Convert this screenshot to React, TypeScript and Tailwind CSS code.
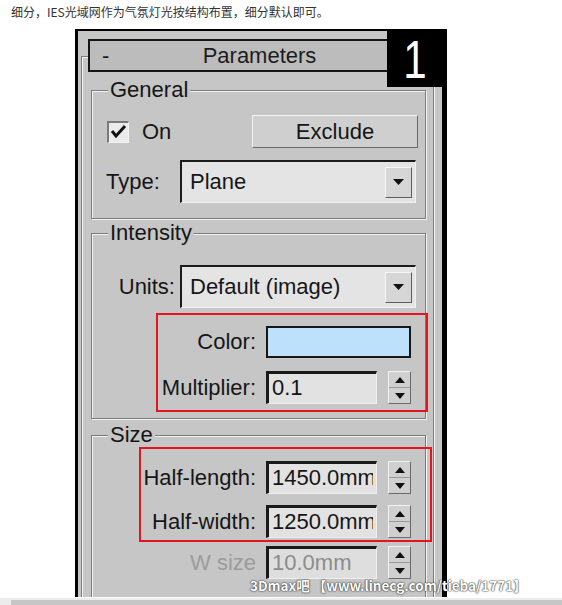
import React from "react";

function TriUp() {
  return (
    <svg width="10" height="6" viewBox="0 0 10 6">
      <polygon points="5,0 10,6 0,6" fill="#111" />
    </svg>
  );
}
function TriDown({ w = 10, h = 6 }: { w?: number; h?: number }) {
  return (
    <svg width={w} height={h} viewBox={`0 0 ${w} ${h}`}>
      <polygon points={`0,0 ${w},0 ${w / 2},${h}`} fill="#111" />
    </svg>
  );
}

function Spinner() {
  return (
    <div className="flex h-[33px] w-[23px] flex-col border border-t-[#f2f2f2] border-l-[#f2f2f2] border-b-[#6a6a6a] border-r-[#6a6a6a] bg-[#d0d0d0]">
      <div className="flex flex-1 items-center justify-center border-b border-b-[#9a9a9a]">
        <TriUp />
      </div>
      <div className="flex flex-1 items-center justify-center">
        <TriDown />
      </div>
    </div>
  );
}

function Field({ value, disabled }: { value: string; disabled?: boolean }) {
  return (
    <div
      className={
        disabled
          ? "h-[33px] w-[111px] border-t-[3px] border-l-[3px] border-b border-r border-t-[#1a1a1a] border-l-[#1a1a1a] border-b-[#efefef] border-r-[#efefef] bg-[#dedede] pl-[3px] text-[22px] leading-[28px] text-[#8c8c8c]"
          : "h-[33px] w-[111px] border-t-[3px] border-l-[3px] border-b border-r border-t-[#1a1a1a] border-l-[#1a1a1a] border-b-[#efefef] border-r-[#efefef] bg-[#e2e2e2] pl-[3px] text-[22px] leading-[28px]"
      }
    >
      <div className="w-[101px] overflow-hidden whitespace-nowrap">{value}</div>
    </div>
  );
}

function SpinRow({
  label,
  value,
  disabled,
}: {
  label: string;
  value: string;
  disabled?: boolean;
}) {
  return (
    <div className="flex items-center justify-end">
      <span
        className={
          disabled
            ? "whitespace-nowrap text-[22px] leading-[24px] text-[#9c9c9c]"
            : "whitespace-nowrap text-[22px] leading-[24px]"
        }
      >
        {label}
      </span>
      <div className="ml-[10px]">
        <Field value={value} disabled={disabled} />
      </div>
      <div className="ml-[11px]">
        <Spinner />
      </div>
    </div>
  );
}

function Dropdown({ value }: { value: string }) {
  return (
    <div className="flex h-[43px] w-[236px] items-center border-t-2 border-l-2 border-b border-r border-t-[#1c1c1c] border-l-[#1c1c1c] border-b-[#f2f2f2] border-r-[#f2f2f2] bg-[#e4e4e4] pl-[8px] pr-[3px]">
      <span className="flex-1 whitespace-nowrap text-[22px] leading-[24px]">{value}</span>
      <div className="flex h-[31px] w-[27px] items-center justify-center border border-t-[#f6f6f6] border-l-[#f6f6f6] border-b-[#5c5c5c] border-r-[#5c5c5c] bg-[#d6d6d6]">
        <TriDown w={11} h={6} />
      </div>
    </div>
  );
}

function Group({
  label,
  className,
  children,
}: {
  label: string;
  className: string;
  children: React.ReactNode;
}) {
  return (
    <div
      className={
        "border border-[#7a7a7a] shadow-[inset_1px_1px_0_#f4f4f4,1px_1px_0_#f4f4f4] " +
        className
      }
    >
      <div className="-mt-[13px] ml-[16px] w-fit bg-[#c6c6c6] px-[2px] text-[22px] leading-[24px]">
        {label}
      </div>
      {children}
    </div>
  );
}

export default function App() {
  return (
    <div className="relative h-[605px] w-[562px] overflow-hidden bg-white font-['Liberation_Sans',Arial,sans-serif] text-[#161616]">
      <div className="h-[29px] pl-[11px] pt-[4px] font-['Noto_Sans_CJK_SC',sans-serif] text-[12px] leading-[16px] text-[#333]">
        细分，IES光域网作为气氛灯光按结构布置，细分默认即可。
      </div>

      <div className="relative ml-[75px] h-[568px] w-[372px] overflow-hidden border-t-2 border-l-[3px] border-r-[5px] border-black bg-[#c6c6c6]">
        {/* badge */}
        <div className="absolute right-0 top-0 z-20 flex h-[56px] w-[55px] items-center justify-center bg-black pl-[2px] text-white">
          <span className="inline-block scale-x-[0.78] text-[54px] leading-none">1</span>
        </div>

        {/* rollout frame */}
        <div className="ml-[3px] mr-[8px] mt-[25px] border border-[#7a7a7a] pb-[80px] shadow-[inset_1px_1px_0_#f4f4f4,1px_1px_0_#f4f4f4]">
          {/* header */}
          <div className="relative z-10 -mt-[18px] ml-[6px] mr-[2px] flex h-[33px] items-center border-2 border-[#151515] bg-[#bcbcbc] text-[22px] leading-[24px] text-[#1c1c1c]">
            <span className="w-[30px] pl-[12px]">-</span>
            <span className="flex-1 text-center">Parameters</span>
            <span className="w-[30px]" />
          </div>

          {/* General */}
          <Group label="General" className="ml-[9px] mr-[7px] mt-[18px] pb-[15px]">
            <div className="mt-[13px] flex h-[33px] items-center pl-[15px] pr-[7px]">
              <div className="flex h-[22px] w-[22px] items-center justify-center border-t-2 border-l-2 border-b border-r border-t-[#7a7a7a] border-l-[#7a7a7a] border-b-[#f4f4f4] border-r-[#f4f4f4] bg-[#ebebeb]">
                <svg width="18" height="18" viewBox="0 0 18 18">
                  <polyline
                    points="2,8 6,13 15,3"
                    fill="none"
                    stroke="#111"
                    strokeWidth="3"
                  />
                </svg>
              </div>
              <span className="ml-[13px] text-[22px] leading-[24px]">On</span>
              <div className="ml-auto flex h-[33px] w-[166px] items-center justify-center border border-t-[#f2f2f2] border-l-[#f2f2f2] border-b-[#6a6a6a] border-r-[#6a6a6a] bg-[#cfcfcf] text-[22px] leading-[24px]">
                Exclude
              </div>
            </div>
            <div className="mt-[12px] flex items-center justify-between pl-[14px] pr-[9px]">
              <span className="text-[22px] leading-[24px]">Type:</span>
              <Dropdown value="Plane" />
            </div>
          </Group>

          {/* Intensity */}
          <Group label="Intensity" className="ml-[9px] mr-[7px] mt-[14px] pb-[6px]">
            <div className="mt-[20px] flex items-center justify-end gap-[5px] pr-[9px]">
              <span className="text-[22px] leading-[24px]">Units:</span>
              <Dropdown value="Default (image)" />
            </div>
            <div className="-mr-[3px] ml-[64px] mt-[5px] border-2 border-[#e3161c] pb-[6px] pr-[15px] pt-[11px]">
              <div className="flex items-center justify-end">
                <span className="text-[22px] leading-[24px]">Color:</span>
                <div className="ml-[10px] h-[32px] w-[145px] border-2 border-[#161616] bg-[#bde0fb]" />
              </div>
              <div className="mt-[13px]">
                <SpinRow label="Multiplier:" value="0.1" />
              </div>
            </div>
          </Group>

          {/* Size */}
          <Group label="Size" className="ml-[9px] mr-[7px] mt-[16px] pb-[40px]">
            <div className="-mr-[7px] ml-[47px] border-2 border-[#e3161c] pb-[2px] pr-[19px] pt-[12px]">
              <SpinRow label="Half-length:" value="1450.0mm" />
              <div className="mt-[11px]">
                <SpinRow label="Half-width:" value="1250.0mm" />
              </div>
            </div>
            <div className="mt-[4px] pr-[14px]">
              <SpinRow label="W size" value="10.0mm" disabled />
            </div>
          </Group>
        </div>
      </div>

      <div className="h-px bg-white" />
      <div className="h-[7px] bg-[#ececec] pl-[11px] pt-[2px]">
        <div className="h-full bg-[#c6c6c6]" />
      </div>

      <div className="absolute left-[250px] top-[575px] z-30 whitespace-nowrap font-['Noto_Sans_CJK_SC',sans-serif] text-[13.5px] font-bold leading-[20px] text-white [text-shadow:0_0_2px_#222,0_0_1px_#222]">
        3Dmax吧 【www.linecg.com/tieba/1771】
      </div>
    </div>
  );
}
